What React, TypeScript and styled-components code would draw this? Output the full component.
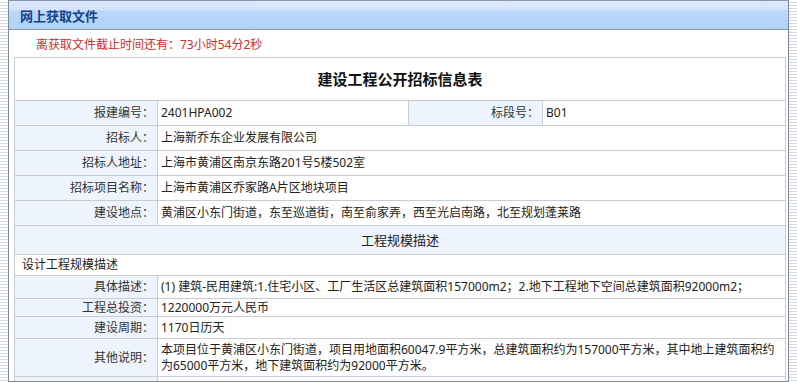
import React from "react";
import styled, { createGlobalStyle } from "styled-components";

const GlobalStyle = createGlobalStyle`
  html, body {
    margin: 0;
    padding: 0;
  }
  body {
    width: 797px;
    height: 382px;
    overflow: hidden;
    background: repeating-linear-gradient(to bottom, #ffffff 0px, #ffffff 2px, #d4d8dc 2px, #d4d8dc 3px);
    font-family: "Noto Sans", "Noto Sans CJK SC", sans-serif;
    font-size: 12px;
    color: #222;
  }
`;

const Panel = styled.div`
  margin-left: 8px;
  width: 781px;
  height: 382px;
  border: 1px solid #7d8a99;
  border-top-color: #8d99a6;
  box-sizing: border-box;
  background: #fff;
  overflow: hidden;
`;

const Header = styled.div`
  height: 28px;
  display: flex;
  align-items: center;
  padding-left: 11px;
  border-bottom: 1px solid #8d9aa8;
  background: linear-gradient(to bottom, #dde9fb 0%, #d2e4fc 30%, #b9d7fb 38%, #b2d2fa 100%);
  color: #15428b;
  font-weight: bold;
  font-size: 13px;
`;

const Notice = styled.div`
  height: 27px;
  display: flex;
  align-items: center;
  padding-left: 27px;
  color: #c8302a;
  font-size: 12px;
`;

const Body = styled.div`
  padding: 0 4px 0 5px;
`;

const Table = styled.table`
  width: 772px;
  border-collapse: collapse;
  table-layout: fixed;
  border: 1px solid #c9cdd2;
`;

const Cell = styled.td`
  border: 1px solid #c9cdd2;
  padding: 0 3px;
  line-height: 16px;
  font-size: 12px;
  vertical-align: middle;
  color: #222;
`;

const Title = styled(Cell)`
  height: 42px;
  text-align: center;
  font-size: 15px;
  font-weight: bold;
  color: #111;
`;

const Row = styled.tr<{ $h: number }>`
  height: ${(p) => p.$h}px;
`;

const Label = styled(Cell)`
  background: #eef4fd;
  text-align: right;
  color: #333;
`;

const Value = styled(Cell)`
  background: #fff;
  text-align: left;
  padding-right: 8px;
`;

const Section = styled(Cell)`
  background: #eef4fd;
  text-align: center;
  font-size: 13px;
`;

const SubHead = styled(Cell)`
  background: #fff;
  text-align: left;
  padding-left: 7px;
`;

type Item = { label: string; value: string; h: number };

const topRows: Item[] = [
  { label: "招标人：", value: "上海新乔东企业发展有限公司", h: 25 },
  { label: "招标人地址：", value: "上海市黄浦区南京东路201号5楼502室", h: 25 },
  { label: "招标项目名称：", value: "上海市黄浦区乔家路A片区地块项目", h: 25 },
  { label: "建设地点：", value: "黄浦区小东门街道，东至巡道街，南至俞家弄，西至光启南路，北至规划蓬莱路", h: 25 },
];

const scaleRows: Item[] = [
  {
    label: "具体描述：",
    value: "(1) 建筑-民用建筑:1.住宅小区、工厂生活区总建筑面积157000m2；2.地下工程地下空间总建筑面积92000m2；",
    h: 23,
  },
  { label: "工程总投资：", value: "1220000万元人民币", h: 18 },
  { label: "建设周期：", value: "1170日历天", h: 22 },
  {
    label: "其他说明：",
    value:
      "本项目位于黄浦区小东门街道，项目用地面积60047.9平方米，总建筑面积约为157000平方米，其中地上建筑面积约为65000平方米，地下建筑面积约为92000平方米。",
    h: 38,
  },
];

export default function App() {
  return (
    <>
      <GlobalStyle />
      <Panel>
        <Header>网上获取文件</Header>
        <Notice>离获取文件截止时间还有：73小时54分2秒</Notice>
        <Body>
          <Table>
            <colgroup>
              <col style={{ width: 143 }} />
              <col style={{ width: 251 }} />
              <col style={{ width: 134 }} />
              <col />
            </colgroup>
            <tbody>
              <tr>
                <Title colSpan={4}>建设工程公开招标信息表</Title>
              </tr>
              <Row $h={25}>
                <Label>报建编号：</Label>
                <Value>2401HPA002</Value>
                <Label>标段号：</Label>
                <Value>B01</Value>
              </Row>
              {topRows.map((r) => (
                <Row $h={r.h} key={r.label}>
                  <Label>{r.label}</Label>
                  <Value colSpan={3}>{r.value}</Value>
                </Row>
              ))}
              <Row $h={29}>
                <Section colSpan={4}>工程规模描述</Section>
              </Row>
              <Row $h={21}>
                <SubHead colSpan={4}>设计工程规模描述</SubHead>
              </Row>
              {scaleRows.map((r) => (
                <Row $h={r.h} key={r.label}>
                  <Label>{r.label}</Label>
                  <Value colSpan={3}>{r.value}</Value>
                </Row>
              ))}
              <Row $h={20}>
                <Label />
                <Value colSpan={3} />
              </Row>
            </tbody>
          </Table>
        </Body>
      </Panel>
    </>
  );
}
